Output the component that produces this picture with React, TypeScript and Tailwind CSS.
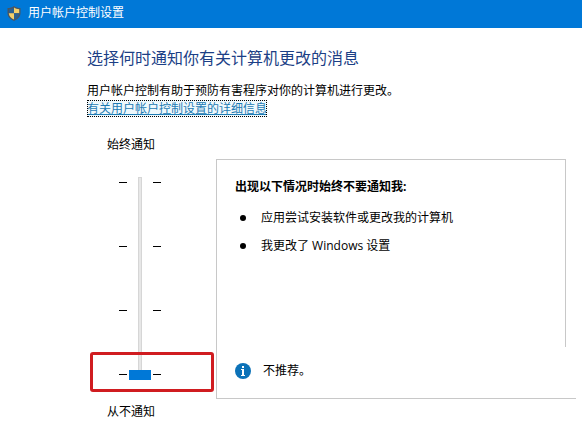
import * as React from 'react';

const levels = [3, 2, 1, 0];

const reasons = ["应用尝试安装软件或更改我的计算机", "我更改了 Windows 设置"];

function ShieldIcon() {
  return (
    <svg width="14" height="15" viewBox="0 0 14 15" aria-hidden="true">
      <path d="M7 0C5.2 1.5 3 2 0.500 2V7c0 3.800 2.800 6.400 6.500 8 3.700-1.600 6.500-4.200 6.500-8V2C11 2 8.800 1.500 7 0Z" fill="#4a5560" />
      <path d="M7 1.500C5.500 2.600 3.800 3.100 1.800 3.200V7.300H7Z" fill="#2c5f8f" />
      <path d="M7 1.500C8.500 2.600 10.200 3.100 12.200 3.200V7.300H7Z" fill="#f4cf6a" />
      <path d="M1.800 7.300C1.900 10.200 4.100 12.300 7 13.600V7.300Z" fill="#f4cf6a" />
      <path d="M12.200 7.300C12.100 10.200 9.900 12.300 7 13.600V7.300Z" fill="#2c5f8f" />
    </svg>
  );
}

function InfoIcon() {
  return (
    <svg width="16" height="16" viewBox="0 0 16 16" aria-hidden="true">
      <circle cx="8" cy="8" r="8" fill="#0c72b8" />
      <rect x="7" y="3" width="2" height="2" fill="#fff" />
      <path d="M6 6H9V12H10V13H6V12H7V7H6Z" fill="#fff" />
    </svg>
  );
}

function Ticks() {
  return (
    <div className="flex flex-col justify-between py-[5px]" aria-hidden="true">
      {levels.map((level) => (
        <span key={level} className="h-px w-2 bg-black" />
      ))}
    </div>
  );
}

export default function App() {
  const [level, setLevel] = React.useState(0);

  return (
    <div className="min-h-screen bg-white font-['Open_Sans','Noto_Sans_CJK_SC',sans-serif] text-xs leading-[18px] text-black">
      {/* Title bar */}
      <header className="flex h-7 items-center gap-[7px] bg-[#0078d7] px-[7px] pb-[2px] text-white">
        <ShieldIcon />
        <span>用户帐户控制设置</span>
      </header>

      <main className="pt-[18px] pl-[87px]">
        <h1 className="text-base leading-6 text-[#1c3f86]">选择何时通知你有关计算机更改的消息</h1>
        <p className="mt-[12px]">用户帐户控制有助于预防有害程序对你的计算机进行更改。</p>
        <a href="#details" className="block w-fit bg-[#eef8fc] leading-[17px] text-[#1f7cb4] underline outline-1 -outline-offset-1 outline-dotted outline-black">
          有关用户帐户控制设置的详细信息
        </a>

        <div className="mt-[19px] flex">
          {/* Notification level */}
          <div className="w-[129px] shrink-0 pl-5">
            <label htmlFor="level" className="block">始终通知</label>
            <div className="relative mt-[23px] flex gap-[2px] pl-3">
              <Ticks />
              <div className="grid h-[203px] w-[22px]">
                <span className="col-start-1 row-start-1 w-1 justify-self-center border border-[#d6d6d6] bg-[#e7e7e7]" />
                <input
                  id="level"
                  type="range"
                  min={0}
                  max={3}
                  value={level}
                  onChange={(e) => setLevel(Number(e.target.value))}
                  className="col-start-1 row-start-1 h-full w-full appearance-none bg-transparent [direction:rtl] [writing-mode:vertical-lr] [&::-webkit-slider-thumb]:h-[10px] [&::-webkit-slider-thumb]:w-[22px] [&::-webkit-slider-thumb]:appearance-none [&::-webkit-slider-thumb]:bg-[#0078d7]"
                />
              </div>
              <Ticks />
              <div className="pointer-events-none absolute -bottom-3 -left-[17px] h-10 w-[124px] rounded-[3px] border-3 border-[#d01c20]" />
            </div>
            <div className="mt-[23px]">从不通知</div>
          </div>

          {/* Description of the selected level */}
          <section className="mt-[23px] mb-[22px] flex flex-1 flex-col">
            <div className="mr-4 flex-1 border-t border-r border-l border-[#c8c8c8] pt-[18px] pl-[18px]">
              <h2 className="font-bold">出现以下情况时始终不要通知我:</h2>
              <ul className="mt-[13px] flex flex-col gap-[10px] pl-[5px]">
                {reasons.map((reason) => (
                  <li key={reason} className="flex items-center gap-[15px]">
                    <span className="size-[6px] shrink-0 rounded-full bg-black" />
                    {reason}
                  </li>
                ))}
              </ul>
            </div>
            <div className="mr-[6px] flex h-[52px] items-center gap-3 border-b border-l border-[#c8c8c8] pb-1 pl-[18px]">
              <InfoIcon />
              <span>不推荐。</span>
            </div>
          </section>
        </div>
      </main>
    </div>
  );
}
